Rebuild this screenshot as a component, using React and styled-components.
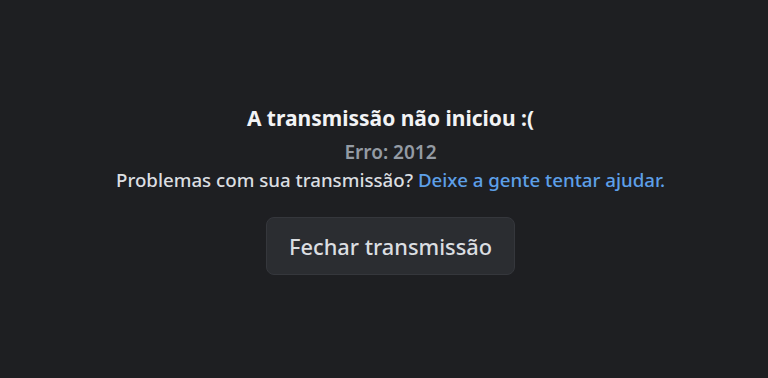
import React from 'react';
import styled, { createGlobalStyle } from 'styled-components';

const GlobalStyle = createGlobalStyle`
  html, body {
    margin: 0;
    padding: 0;
    height: 100%;
    background: #1e1f22;
  }
  #root {
    height: 100%;
  }
`;

const Screen = styled.div`
  display: flex;
  flex-direction: column;
  align-items: center;
  justify-content: center;
  height: 100vh;
  padding: 2px 0 0 13px;
  box-sizing: border-box;
  background: #1e1f22;
  font-family: 'Noto Sans', sans-serif;
  text-align: center;
`;

const Title = styled.h1`
  margin: 0;
  font-size: 21px;
  line-height: 26px;
  font-weight: 700;
  color: #f2f3f5;
`;

const ErrorCode = styled.p`
  margin: 10px 0 0;
  font-size: 19px;
  line-height: 22px;
  font-weight: 600;
  color: #949ba4;
`;

const Help = styled.p`
  margin: 6px 0 0;
  font-size: 18.7px;
  line-height: 22px;
  font-weight: 500;
  color: #dbdee1;
`;

const HelpLink = styled.a`
  color: #5d9fe8;
  text-decoration: none;
  cursor: pointer;
`;

const CloseButton = styled.button`
  margin-top: 26px;
  height: 58px;
  padding: 0 22px;
  border-radius: 8px;
  border: 1px solid #35373c;
  background: #2b2d31;
  color: #dbdee1;
  font-family: 'Noto Sans', sans-serif;
  font-size: 21.8px;
  font-weight: 500;
  cursor: pointer;
`;

const App = () => {
  return (
    <>
      <GlobalStyle />
      <Screen>
        <Title>A transmissão não iniciou :(</Title>
        <ErrorCode>Erro: 2012</ErrorCode>
        <Help>
          Problemas com sua transmissão? <HelpLink>Deixe a gente tentar ajudar.</HelpLink>
        </Help>
        <CloseButton>Fechar transmissão</CloseButton>
      </Screen>
    </>
  );
};

export default App;
